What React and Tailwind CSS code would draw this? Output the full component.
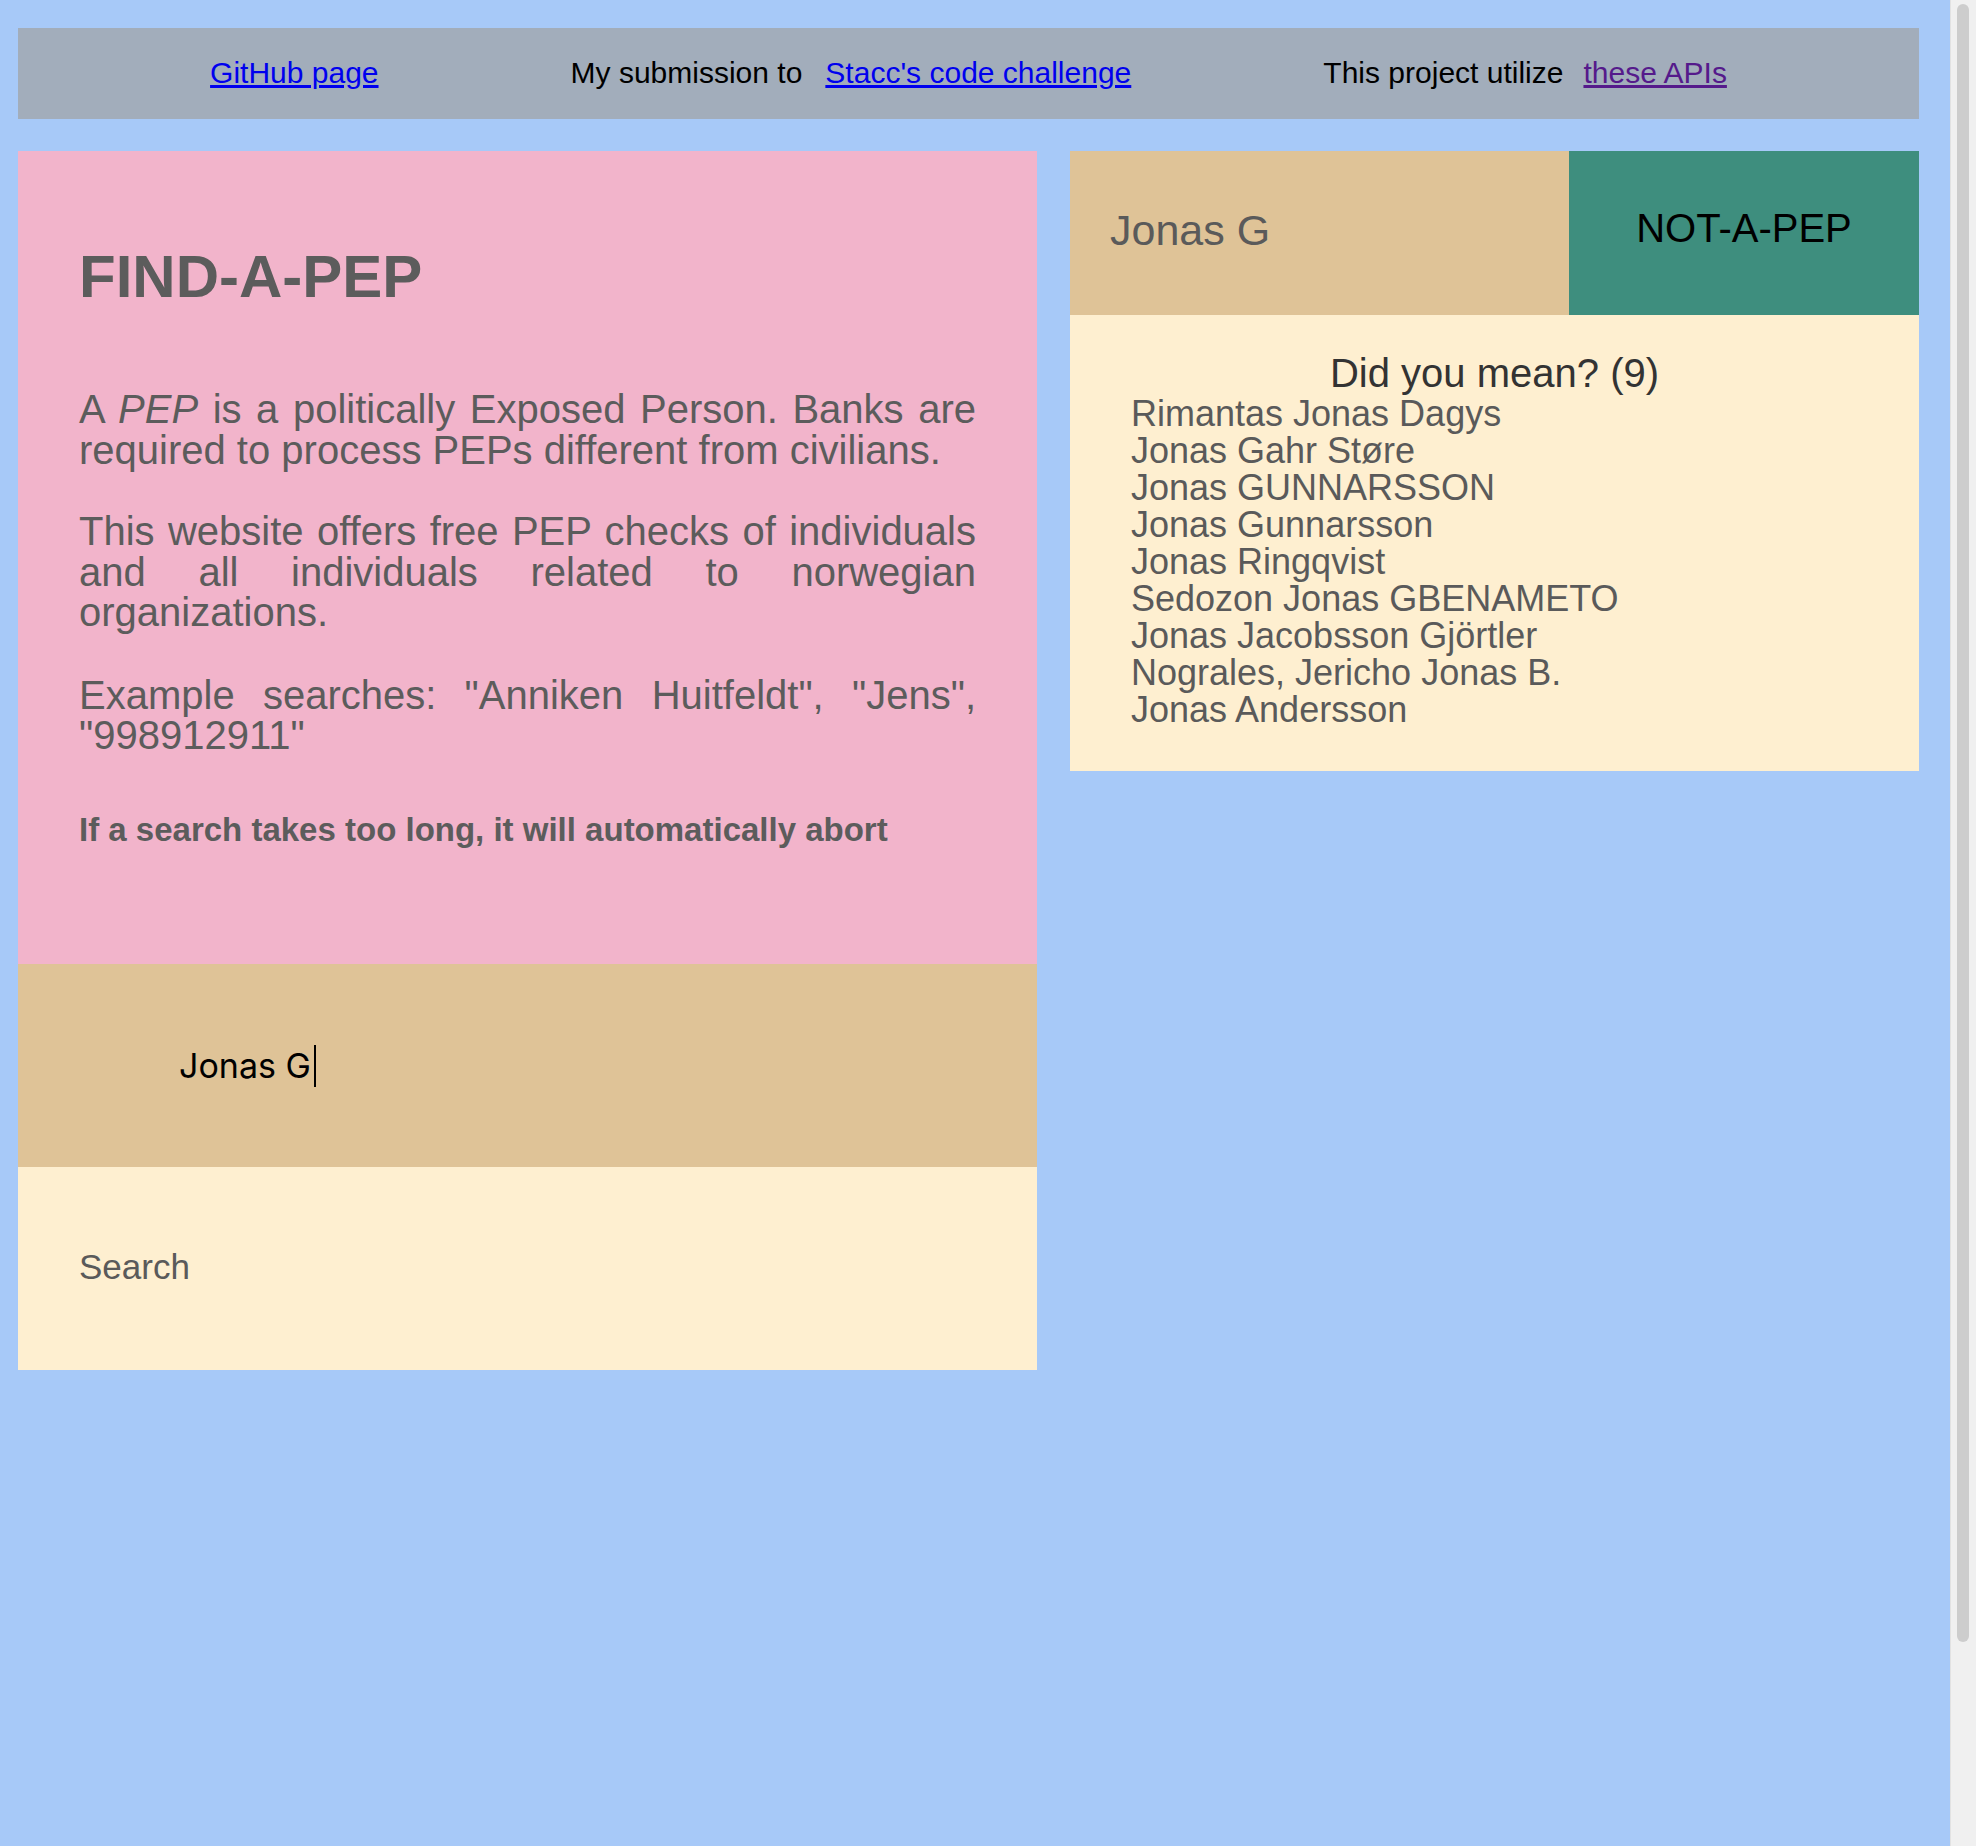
export default function App() {
  const names = [
    "Rimantas Jonas Dagys",
    "Jonas Gahr Støre",
    "Jonas GUNNARSSON",
    "Jonas Gunnarsson",
    "Jonas Ringqvist",
    "Sedozon Jonas GBENAMETO",
    "Jonas Jacobsson Gjörtler",
    "Nograles, Jericho Jonas B.",
    "Jonas Andersson",
  ];
  return (
    <div
      className="flex h-[1846px] w-full overflow-hidden bg-[#a7c9f8]"
      style={{ fontFamily: '"Liberation Sans", Arial, Helvetica, sans-serif' }}
    >
      <div className="flex-1 pl-[18px] pr-[31px] pt-[28px]">
        <header className="flex h-[91px] items-center justify-evenly bg-[#a2adbb] pb-[3px] text-[30px] text-black">
          <a href="#" className="text-[#0000ee] underline">GitHub page</a>
          <div className="flex items-center">
            <span>My submission to</span>
            <a href="#" className="ml-[23px] text-[#0000ee] underline">Stacc's code challenge</a>
          </div>
          <div className="flex items-center">
            <span>This project utilize</span>
            <a href="#" className="ml-[20px] text-[#551a8b] underline">these APIs</a>
          </div>
        </header>

        <div className="mt-[32px] flex items-start gap-[33px]">
          <div className="flex w-[1019px] flex-col">
            <section className="h-[813px] bg-[#f2b4cb] px-[61px] pt-[96px] text-[#5c5c5c]">
              <h2 className="text-[60px] font-bold leading-[60px]">FIND-A-PEP</h2>
              <p className="mt-[82px] text-justify text-[40px] leading-[40.5px]">
                A <em>PEP</em> is a politically Exposed Person. Banks are required to process PEPs different from civilians.
              </p>
              <p className="mt-[41px] text-justify text-[40px] leading-[40.5px]">
                This website offers free PEP checks of individuals and all individuals related to norwegian organizations.
              </p>
              <p className="mt-[42px] text-justify text-[40px] leading-[40.5px]">
                Example searches: "Anniken Huitfeldt", "Jens", "998912911"
              </p>
              <h5 className="mt-[57px] text-[33px] font-bold leading-[33px]">
                If a search takes too long, it will automatically abort
              </h5>
            </section>
            <section className="h-[203px] bg-[#dfc397] pl-[161px] pt-[81px]">
              <div
                className="flex items-center text-[34px] leading-none text-black"
                style={{ fontFamily: 'Inter, "Liberation Sans", sans-serif' }}
              >
                <span>Jonas G</span>
                <span className="ml-[3px] h-[42px] w-[2px] bg-black" />
              </div>
            </section>
            <section className="h-[203px] bg-[#feefd0] pl-[61px] pt-[82px]">
              <span className="text-[35px] leading-none text-[#5a5a5a]">Search</span>
            </section>
          </div>

          <div className="flex w-[849px] flex-col">
            <div className="flex h-[164px]">
              <div className="w-[499px] bg-[#dfc397] pl-[40px] pt-[58px] text-[43px] leading-none text-[#5a5a5a]">
                Jonas G
              </div>
              <div className="flex-1 bg-[#3e8e7e] pt-[57px] text-center text-[40px] leading-[40px] text-black">
                NOT-A-PEP
              </div>
            </div>
            <div className="bg-[#feefd0] pb-[43px] pt-[38px]">
              <div className="text-center text-[40px] leading-[40px] text-[#333333]">Did you mean? (9)</div>
              <ul className="mt-[2px] pl-[61px] text-[36px] leading-[37px] text-[#5a5a5a]">
                {names.map((n) => (
                  <li key={n}>{n}</li>
                ))}
              </ul>
            </div>
          </div>
        </div>
      </div>

      <div className="flex w-[26px] shrink-0 justify-center border-l border-[#e2e2e2] bg-[#f0f0f0] pr-[2px] pt-[4px]">
        <div className="h-[1638px] w-[12px] rounded-full bg-[#cdcdcd]" />
      </div>
    </div>
  );
}
